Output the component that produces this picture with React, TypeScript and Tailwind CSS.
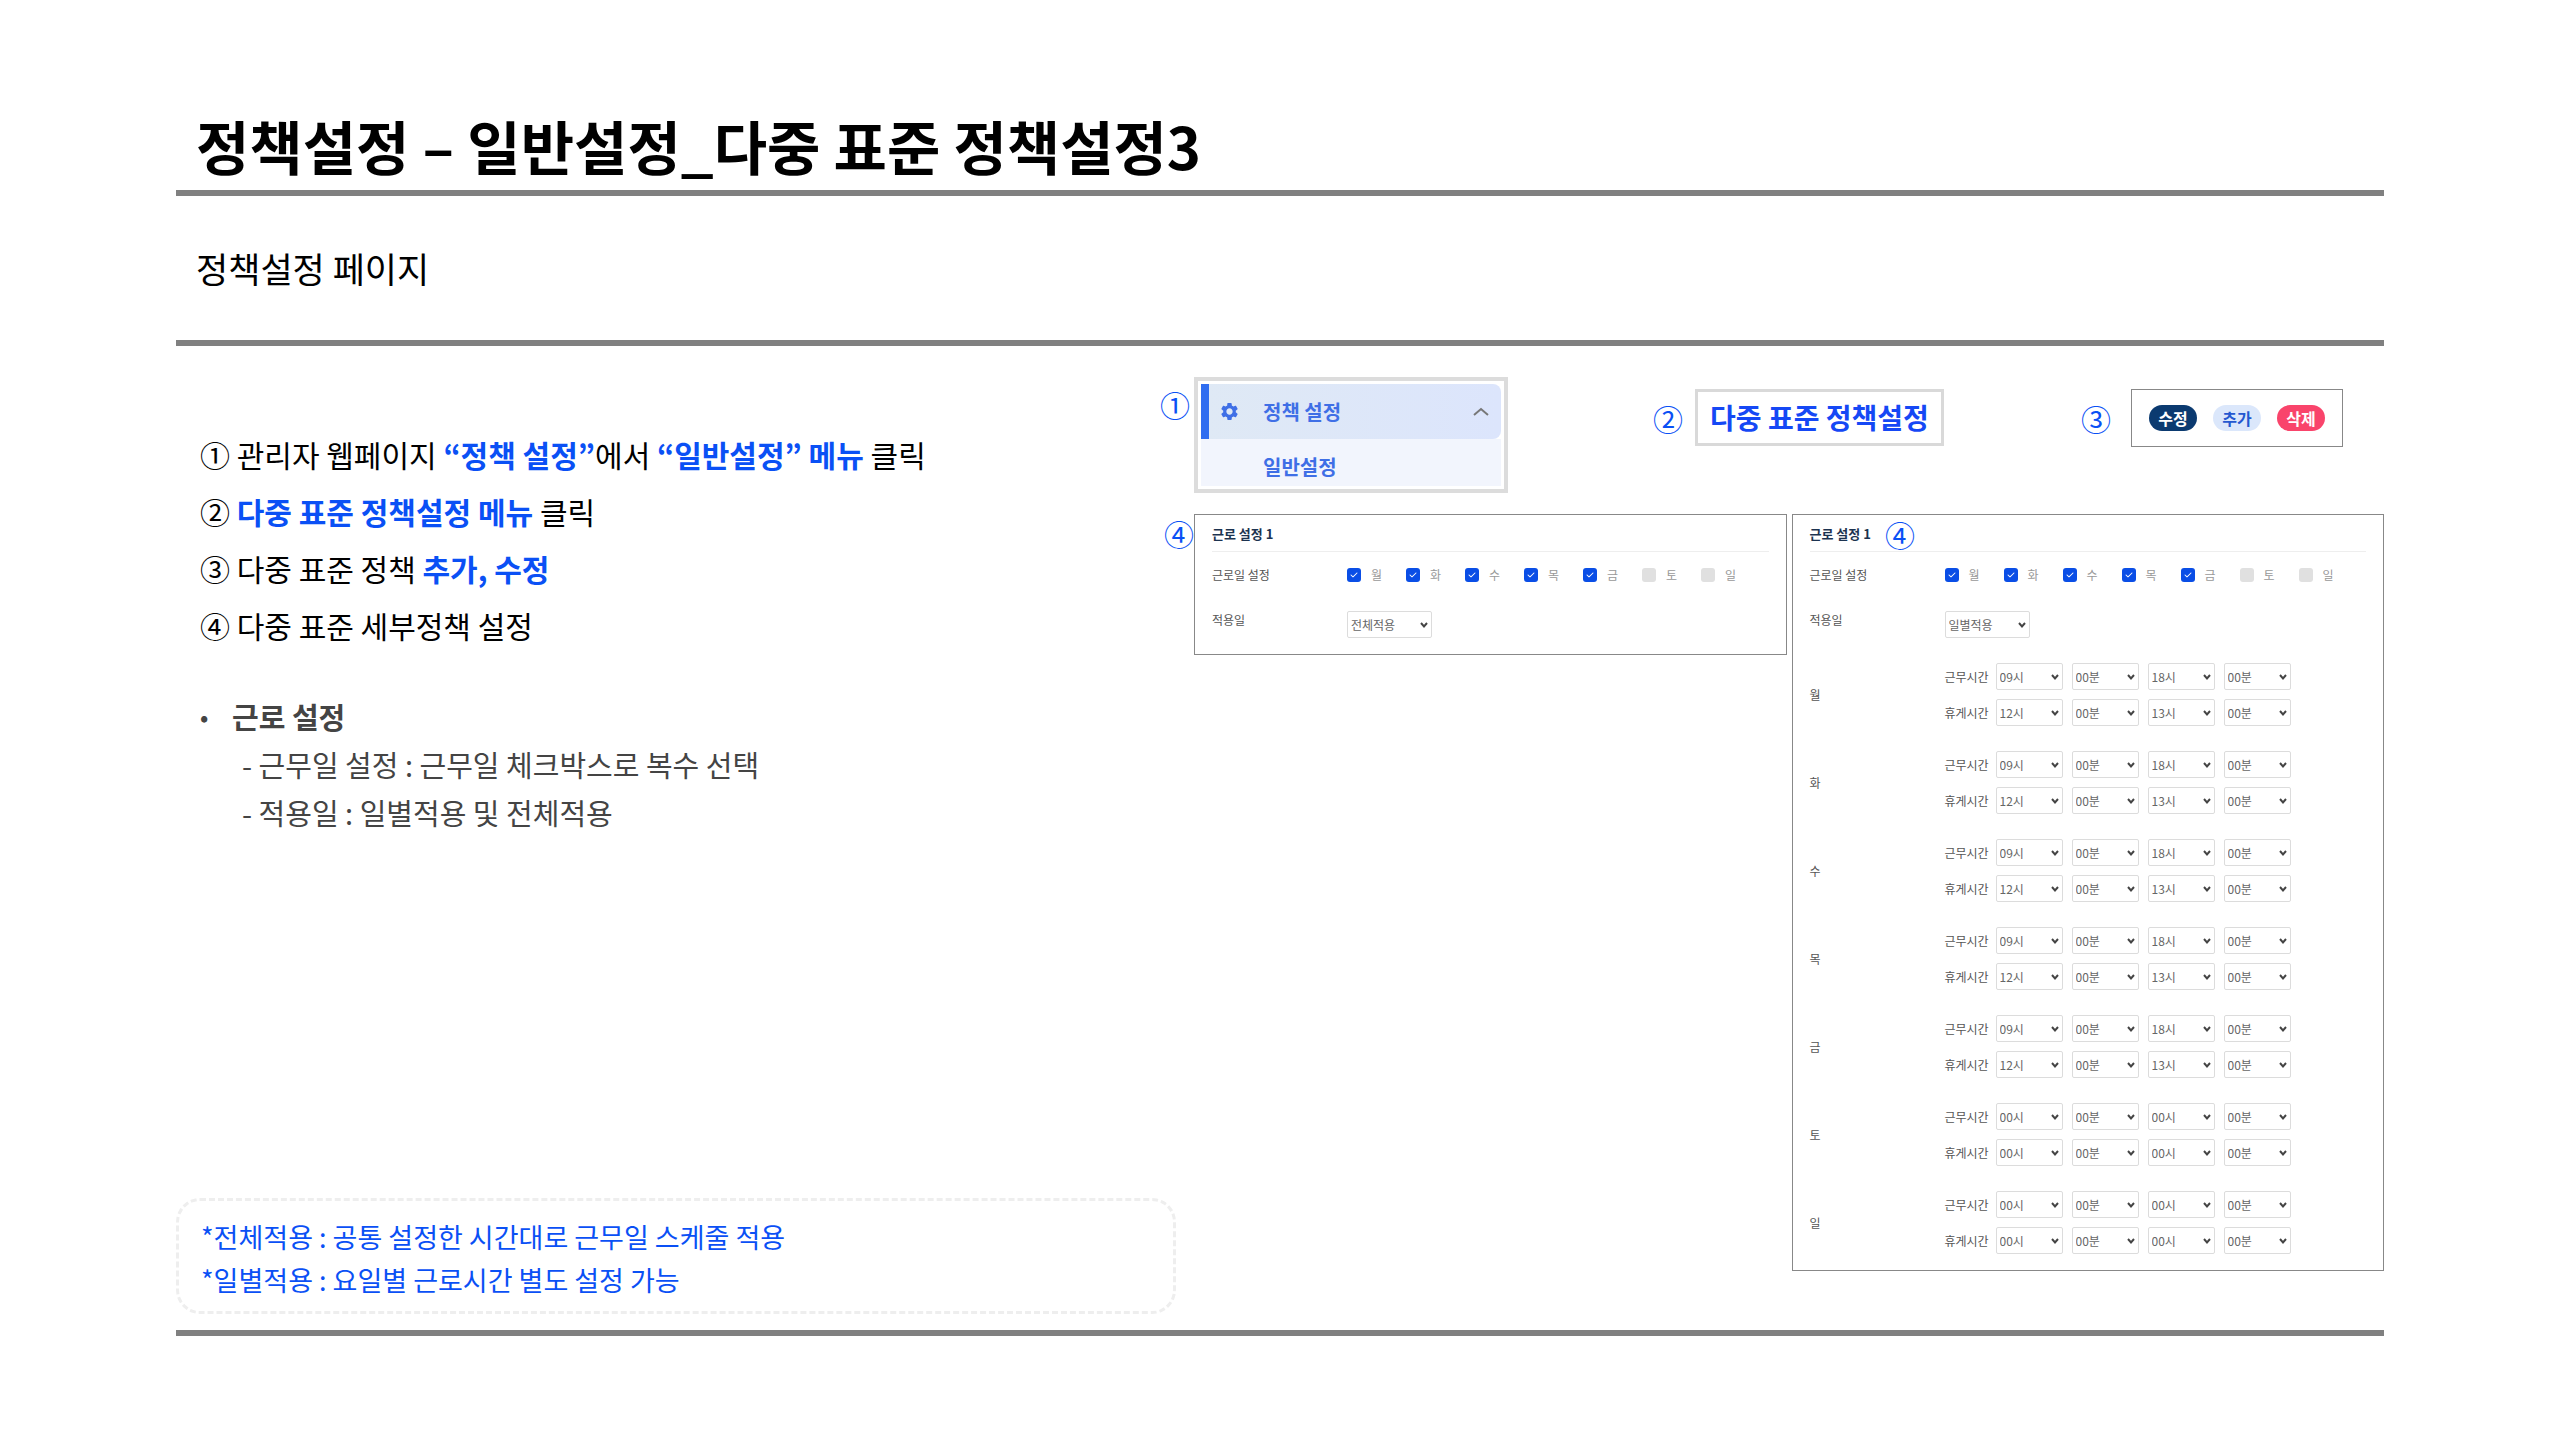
import React from 'react';
import { FaCheck } from 'react-icons/fa6';
import { MdSettings } from 'react-icons/md';

const WEEKDAYS = ['월', '화', '수', '목', '금', '토', '일'];
const WORKDAYS = ['월', '화', '수', '목', '금'];

const OFF = ['00시', '00분', '00시', '00분'];

const SCHEDULE = WEEKDAYS.map((day) => ({
  day,
  rows: WORKDAYS.includes(day)
    ? [
        { label: '근무시간', values: ['09시', '00분', '18시', '00분'] },
        { label: '휴게시간', values: ['12시', '00분', '13시', '00분'] },
      ]
    : [
        { label: '근무시간', values: OFF },
        { label: '휴게시간', values: OFF },
      ],
}));

const TIME_PARTS = ['시작 시', '시작 분', '종료 시', '종료 분'];

const Em: React.FC<{ children: React.ReactNode }> = ({ children }) => (
  <strong className="font-bold text-[#0a50f5]">{children}</strong>
);

const Badge: React.FC<{ mark: string; className?: string }> = ({ mark, className = '' }) => (
  <span className={`text-[30px] leading-[30px] text-[#0a50f5] ${className}`}>{mark}</span>
);

const Select: React.FC<{ id?: string; label?: string; value: string; options?: string[]; className: string }> = ({
  id,
  label,
  value,
  options = [value],
  className,
}) => (
  <div className={`relative ${className}`}>
    <select
      id={id}
      aria-label={label}
      defaultValue={value}
      className="block w-full h-[27px] appearance-none rounded-xs border border-[#dcdcdc] bg-white pl-[3px] pr-4 text-[12px] text-[#666]"
    >
      {options.map((option) => (
        <option key={option}>{option}</option>
      ))}
    </select>
    <svg
      viewBox="0 0 8 6"
      className="pointer-events-none absolute right-1 top-[11px] h-[6px] w-2"
      fill="none"
      stroke="#444"
      strokeWidth="2"
      aria-hidden="true"
    >
      <path d="M1 1 L4 4.4 L7 1" />
    </svg>
  </div>
);

const DayCheck: React.FC<{ day: string }> = ({ day }) => (
  <label className="flex w-[59px] items-center gap-2.5 text-[12px] text-[#999]">
    <span className="relative block size-3.5">
      <input
        type="checkbox"
        defaultChecked={WORKDAYS.includes(day)}
        className="peer block size-3.5 appearance-none rounded-[3px] bg-[#e0e0e0] checked:bg-[#0a4ee6]"
      />
      <FaCheck size={8} className="pointer-events-none absolute inset-0 m-auto hidden text-white peer-checked:block" />
    </span>
    {day}
  </label>
);

const WorkPanel: React.FC<{ id: string; apply: string; badge?: React.ReactNode; children?: React.ReactNode }> = ({
  id,
  apply,
  badge,
  children,
}) => (
  <section className="border border-[#888] px-[17px] pt-px pb-4 text-[12px] text-[#555]">
    <div className="flex h-9 items-center gap-3.5 border-b border-[#eee]">
      <h3 className="text-[13px] font-bold text-[#1c3350]">근로 설정 1</h3>
      {badge}
    </div>
    <div className="flex h-[46px] items-center">
      <span className="w-[135px] shrink-0">근로일 설정</span>
      <div className="flex">
        {WEEKDAYS.map((day) => (
          <DayCheck key={day} day={day} />
        ))}
      </div>
    </div>
    <div className="mt-[13px] flex">
      <label htmlFor={id} className="w-[135px] shrink-0">
        적용일
      </label>
      <Select id={id} value={apply} options={['전체적용', '일별적용']} className="w-[85px]" />
    </div>
    {children}
  </section>
);

const App: React.FC = () => {
  return (
    <div className="min-h-screen bg-white px-44 font-['Noto_Sans_CJK_KR',sans-serif] text-black">
      <header>
        <h1 className="border-b-6 border-[#808080] pl-5 pt-[104px] pb-1 text-[58px] leading-[82px] font-bold">
          정책설정 – 일반설정_다중 표준 정책설정3
        </h1>
        <p className="border-b-6 border-[#808080] pl-5 pt-[48px] pb-[48px] text-[35px] leading-[48px]">정책설정 페이지</p>
      </header>

      <main className="grid grid-cols-[1000fr_1190fr] gap-[18px] border-b-6 border-[#808080] pb-[16px]">
        <div className="flex flex-col justify-between pt-[80px]">
          <div className="pl-6">
            <ol className="text-[30px] leading-[57px]">
              <li>① 관리자 웹페이지 <Em>“정책 설정”</Em>에서 <Em>“일반설정” 메뉴</Em> 클릭</li>
              <li>② <Em>다중 표준 정책설정 메뉴</Em> 클릭</li>
              <li>③ 다중 표준 정책 <Em>추가, 수정</Em></li>
              <li>④ 다중 표준 세부정책 설정</li>
            </ol>
            <div className="mt-[38px] text-[29px] leading-[48px] text-[#444]">
              <h2 className="flex items-center font-bold">
                <span className="w-8 text-[22px]">•</span>근로 설정
              </h2>
              <ul className="pl-[42px]">
                <li>- 근무일 설정 : 근무일 체크박스로 복수 선택</li>
                <li>- 적용일 : 일별적용 및 전체적용</li>
              </ul>
            </div>
          </div>

          <aside className="rounded-3xl border-3 border-dashed border-[#eee] px-[22px] pt-3.5 pb-2.5 text-[27px] leading-[43px] text-[#0a50f5]">
            <p>*전체적용 : 공통 설정한 시간대로 근무일 스케줄 적용</p>
            <p>*일별적용 : 요일별 근로시간 별도 설정 가능</p>
          </aside>
        </div>

        <div className="pt-[31px] pb-[43px]">
          <div className="flex items-start pr-[41px]">
            <div className="relative">
              <Badge mark="①" className="absolute -left-[34px] top-3" />
              <nav className="w-[314px] border-4 border-[#dcdcdc] p-[3px] text-[20px] font-bold text-[#3f6fe6]">
                <button className="flex h-[55px] w-full items-center rounded-r-lg border-l-8 border-[#2f6df0] bg-linear-to-r from-[#dfe9f5] to-[#dce5fc] pl-2.5 pr-3">
                  <MdSettings size={21} />
                  <span className="ml-[23px]">정책 설정</span>
                  <svg viewBox="0 0 16 10" className="ml-auto h-2.5 w-4" fill="none" stroke="#777" strokeWidth="2" aria-hidden="true">
                    <path d="M1 8 L8 2 L15 8" />
                  </svg>
                </button>
                <a href="#general" className="block bg-[#f2f5fd] pt-2 pl-[62px] leading-[39px]">
                  일반설정
                </a>
              </nav>
            </div>

            <div className="mt-3 ml-[145px] flex items-center gap-3">
              <Badge mark="②" />
              <a href="#standard" className="border-3 border-[#d9d9d9] px-3 text-[28px] leading-[51px] font-bold text-[#1548f5]">
                다중 표준 정책설정
              </a>
            </div>

            <div className="mt-3 ml-auto flex items-center gap-5">
              <Badge mark="③" />
              <div className="flex gap-4 border border-[#888] px-[17px] py-[15px] text-[16px] font-bold">
                <button className="h-[26px] w-12 rounded-full bg-[#0b3a70] leading-none text-white">수정</button>
                <button className="h-[26px] w-12 rounded-full bg-[#dbe7fb] leading-none text-[#2458d0]">추가</button>
                <button className="h-[26px] w-12 rounded-full bg-[#f9446b] leading-none text-white">삭제</button>
              </div>
            </div>
          </div>

          <div className="mt-[21px] grid grid-cols-2 items-start gap-[5px]">
            <div className="relative">
              <Badge mark="④" className="absolute -left-[30px] top-1" />
              <WorkPanel id="apply-all" apply="전체적용" />
            </div>
            <WorkPanel id="apply-day" apply="일별적용" badge={<Badge mark="④" />}>
              <div className="mt-[25px] flex flex-col gap-[25px]">
                {SCHEDULE.map(({ day, rows }) => (
                  <div key={day} className="flex items-center">
                    <span className="w-[135px] shrink-0">{day}</span>
                    <div className="flex flex-col gap-[9px]">
                      {rows.map((row) => (
                        <div key={row.label} className="flex items-center gap-[9px]">
                          <span className="w-[42px] whitespace-nowrap">{row.label}</span>
                          {row.values.map((value, idx) => (
                            <Select
                              key={idx}
                              label={`${day} ${row.label} ${TIME_PARTS[idx]}`}
                              value={value}
                              className="w-[67px]"
                            />
                          ))}
                        </div>
                      ))}
                    </div>
                  </div>
                ))}
              </div>
            </WorkPanel>
          </div>
        </div>
      </main>
    </div>
  );
};

export default App;
